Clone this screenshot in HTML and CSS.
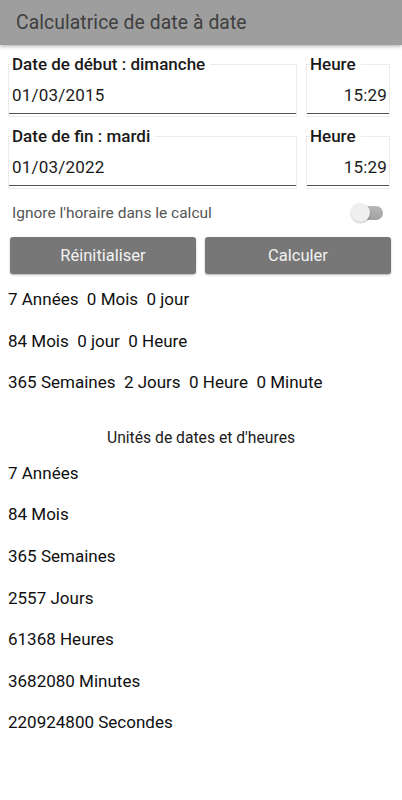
FILE: index.html
```html
<!DOCTYPE html>
<html lang="fr">
<head>
<meta charset="utf-8">
<title>Calculatrice de date à date</title>
<link rel="stylesheet" href="styles.css">
</head>
<body>
<header class="appbar"><h1 class="title">Calculatrice de date à date</h1></header>
<main class="content">
  <div class="field-row">
    <fieldset class="field field-date">
      <legend class="field-label">Date de début : dimanche</legend>
      <div class="field-input">01/03/2015</div>
    </fieldset>
    <fieldset class="field field-time">
      <legend class="field-label">Heure</legend>
      <div class="field-input align-right">15:29</div>
    </fieldset>
  </div>
  <div class="field-row">
    <fieldset class="field field-date">
      <legend class="field-label">Date de fin : mardi</legend>
      <div class="field-input">01/03/2022</div>
    </fieldset>
    <fieldset class="field field-time">
      <legend class="field-label">Heure</legend>
      <div class="field-input align-right">15:29</div>
    </fieldset>
  </div>
  <div class="switch-row">
    <span class="switch-label">Ignore l'horaire dans le calcul</span>
    <span class="switch"><span class="switch-thumb"></span></span>
  </div>
  <div class="button-row">
    <button class="btn">Réinitialiser</button>
    <button class="btn">Calculer</button>
  </div>
  <div class="results results-summary">
    <p class="line">7 Années&nbsp; 0 Mois&nbsp; 0 jour</p>
    <p class="line">84 Mois&nbsp; 0 jour&nbsp; 0 Heure</p>
    <p class="line">365 Semaines&nbsp; 2 Jours&nbsp; 0 Heure&nbsp; 0 Minute</p>
  </div>
  <h2 class="units-title">Unités de dates et d'heures</h2>
  <div class="results">
    <p class="line">7 Années</p>
    <p class="line">84 Mois</p>
    <p class="line">365 Semaines</p>
    <p class="line">2557 Jours</p>
    <p class="line">61368 Heures</p>
    <p class="line">3682080 Minutes</p>
    <p class="line">220924800 Secondes</p>
  </div>
</main>
</body>
</html>
```

FILE: styles.css
```css
* { box-sizing: border-box; }
html, body { margin: 0; padding: 0; background: #ffffff; }
body {
  font-family: Roboto, "Noto Sans", "Liberation Sans", sans-serif;
  color: #141414;
  width: 402px;
  height: 800px;
  overflow: hidden;
}
.appbar {
  height: 45px;
  background: #9e9e9e;
  box-shadow: 0 1px 4px rgba(0, 0, 0, 0.35);
  display: flex;
  align-items: center;
  padding-left: 16px;
  position: relative;
  z-index: 1;
}
.title {
  margin: 0;
  font-size: 19.3px;
  font-weight: 400;
  color: #3f3f3f;
  letter-spacing: 0.1px;
}
.content {
  display: flex;
  flex-direction: column;
}
.field-row {
  display: flex;
  gap: 9px;
  padding: 0 12px 0 8px;
  margin-top: 9px;
}
.field {
  margin: 0;
  padding: 0 0 2px 0;
  border: 1px solid #ebebeb;
  min-width: 0;
}
.field-date { flex: 1; }
.field-time { width: 84px; flex: none; }
.field-label {
  font-size: 17px;
  font-weight: 500;
  line-height: 20px;
  padding: 0 5px 0 0;
  margin-left: 3px;
  color: #1a1a1a;
}
.field-input {
  font-size: 17px;
  line-height: 36px;
  padding: 3px 0 0 3px;
  border-bottom: 1.5px solid #555555;
  color: #1a1a1a;
  letter-spacing: 0.2px;
}
.align-right { text-align: right; padding: 3px 2px 0 0; }
.switch-row {
  display: flex;
  align-items: center;
  justify-content: space-between;
  height: 26px;
  margin-top: 11px;
  padding: 0 19px 0 12px;
}
.switch-label {
  font-size: 15.5px;
  color: #555555;
}
.switch {
  position: relative;
  width: 31px;
  height: 14px;
  border-radius: 7px;
  background: linear-gradient(#b8b8b8, #a0a0a0);
}
.switch-thumb {
  position: absolute;
  left: -1px;
  top: -3px;
  width: 19px;
  height: 19px;
  border-radius: 50%;
  background: #efefef;
  box-shadow: 0 1px 2px rgba(0, 0, 0, 0.25);
}
.button-row {
  display: flex;
  gap: 9px;
  padding: 0 11px 0 10px;
  margin-top: 11px;
}
.btn {
  flex: 1;
  height: 37px;
  border: none;
  border-radius: 3px;
  background: #777777;
  color: #f2f2f2;
  font-family: Roboto, "Noto Sans", "Liberation Sans", sans-serif;
  font-size: 16.5px;
  box-shadow: 0 1px 2px rgba(0, 0, 0, 0.3);
  padding: 0;
}
.results {
  padding: 0 8px;
}
.results-summary { margin-top: 5px; }
.line {
  margin: 0;
  font-size: 17px;
  line-height: 41.6px;
  font-weight: 400;
  color: #0f0f0f;
}
.units-title {
  margin: 0;
  padding: 24px 0 5px;
  font-size: 15.7px;
  line-height: 20px;
  font-weight: 400;
  text-align: center;
  color: #1a1a1a;
}
```
